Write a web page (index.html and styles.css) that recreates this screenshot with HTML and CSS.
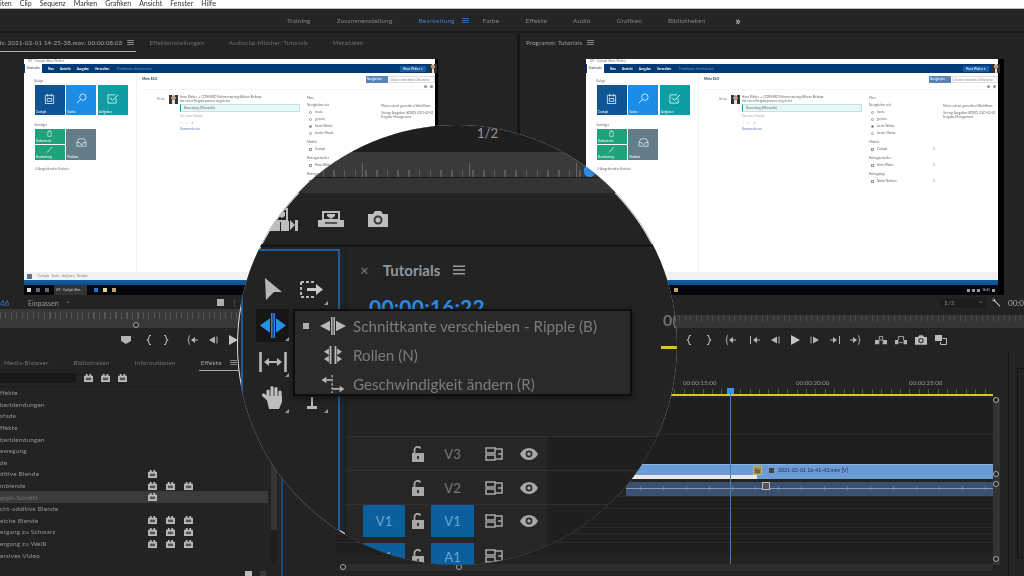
FILE: index.html
```html
<!DOCTYPE html>
<html lang="de">
<head>
  <meta charset="UTF-8">
  <title>Premiere Pro - Tutorials</title>
  <link rel="stylesheet" href="styles.css">
</head>
<body>
  <svg class="defs" width="0" height="0">
    <symbol id="ham" viewBox="0 0 8 6"><path d="M0 .5h8M0 3h8M0 5.500h8" stroke="currentColor" fill="none"/></symbol>
    <symbol id="badge" viewBox="0 0 10 9"><path d="M0 2h2V0h2v2h2V0h2v2h2v7H0z" fill="#bdbdbd"/><path d="M2 4h6v3H2z" fill="#555"/></symbol>
    <symbol id="marker" viewBox="0 0 12 10"><path d="M1 1h10v5L6 9 1 6z" fill="#b5b5b5"/></symbol>
    <symbol id="brace-l" viewBox="0 0 12 10"><path d="M8 .5H7C5.500 .5 6.500 4 4.500 5c2 1 1 4.500 2.500 4.500h1" stroke="#c0c0c0" stroke-width="1.100" fill="none"/></symbol>
    <symbol id="brace-r" viewBox="0 0 12 10"><path d="M4 .5h1C6.500 .5 5.500 4 7.500 5c-2 1-1 4.500-2.500 4.500H4" stroke="#c0c0c0" stroke-width="1.100" fill="none"/></symbol>
    <symbol id="go-in" viewBox="0 0 12 10"><path d="M3 .5H2.500C1.500 1 2.500 4 1 5c1.500 1 .5 4 1.500 4.500H3M11 5H7" stroke="#b5b5b5" fill="none"/><path d="M8 2 4 5l4 3z" fill="#b5b5b5"/></symbol>
    <symbol id="step-in" viewBox="0 0 12 10"><path d="M1.500 1v8M11 5H7" stroke="#b5b5b5" fill="none"/><path d="M8 2 4 5l4 3z" fill="#b5b5b5"/></symbol>
    <symbol id="back" viewBox="0 0 12 10"><path d="M8 1.500 2 5l6 3.500z" fill="#b5b5b5"/><path d="M10 1.500v7" stroke="#b5b5b5" fill="none"/></symbol>
    <symbol id="play" viewBox="0 0 12 10"><path d="M2 0l9 5-9 5z" fill="#c4c4c4"/></symbol>
    <symbol id="fwd" viewBox="0 0 12 10"><path d="M4 1.500 10 5 4 8.500z" fill="#b5b5b5"/><path d="M2 1.500v7" stroke="#b5b5b5" fill="none"/></symbol>
    <symbol id="step-out" viewBox="0 0 12 10"><path d="M10.500 1v8M1 5h4" stroke="#b5b5b5" fill="none"/><path d="M4 2l4 3-4 3z" fill="#b5b5b5"/></symbol>
    <symbol id="go-out" viewBox="0 0 12 10"><path d="M9 .5h.5c1 .5 0 3.500 1.500 4.500-1.500 1-.5 4-1.500 4.500H9M1 5h4" stroke="#b5b5b5" fill="none"/><path d="M4 2l4 3-4 3z" fill="#b5b5b5"/></symbol>
    <symbol id="lift" viewBox="0 0 14 10"><path d="M0 5h5v5H0zM9 5h5v5H9z" fill="#b5b5b5"/><path d="M5 1h4v4H5z" fill="none" stroke="#b5b5b5"/></symbol>
    <symbol id="extract" viewBox="0 0 14 10"><path d="M0 5h4v5H0zM10 5h4v5h-4z" fill="#b5b5b5"/><path d="M4 5V1h6v4M5 8h4" fill="none" stroke="#b5b5b5"/></symbol>
    <symbol id="camera" viewBox="0 0 20 16"><path d="M0 3h5l2-3h6l2 3h5v13H0z" fill="#bdbdbd"/><circle cx="10" cy="9" r="4.500" fill="#3a3a3a"/><circle cx="10" cy="9" r="2.500" fill="#bdbdbd"/></symbol>
    <symbol id="compare" viewBox="0 0 12 10"><path d="M0 0h7v6H0z" fill="#bdbdbd"/><path d="M7.500 3.500h4v6h-6V7" fill="none" stroke="#bdbdbd"/></symbol>
    <symbol id="lock" viewBox="0 0 12 16"><path d="M0 7h12v9H0z" fill="#a8a8a8"/><path d="M5 10h2v3H5z" fill="#333"/><path d="M2.500 7V3.500a3.200 3.200 0 0 1 6-1" fill="none" stroke="#a8a8a8" stroke-width="1.800"/></symbol>
    <symbol id="sync" viewBox="0 0 18 14"><path d="M1 1h9v5H1zM1 8h9v5H1z" fill="none" stroke="#a8a8a8" stroke-width="1.500"/><path d="M10 2h7v10h-7M13 7h4" fill="none" stroke="#a8a8a8" stroke-width="1.500"/></symbol>
    <symbol id="eye" viewBox="0 0 18 12"><path d="M0 6c4-8 14-8 18 0-4 8-14 8-18 0z" fill="#a8a8a8"/><circle cx="9" cy="6" r="3.400" fill="#2a2a2a"/><circle cx="9" cy="6" r="1.800" fill="#a8a8a8"/></symbol>
    <symbol id="ripple" viewBox="0 0 26 24" preserveAspectRatio="none"><path d="M11.800 0v24M14.200 0v24" stroke="currentColor" stroke-width="1.500" fill="none"/><path d="M0 12l10-7v14zM26 12l-10-7v14z" fill="currentColor"/></symbol>
    <symbol id="t-cal" viewBox="0 0 12 12"><path d="M1.500 2.500h9v9h-9zM4 1v3M8 1v3M3.500 6h5v3h-5z" fill="none" stroke="#fff" stroke-width=".8"/></symbol>
    <symbol id="t-search" viewBox="0 0 12 12"><circle cx="7.500" cy="4.500" r="3.500" fill="none" stroke="#fff" stroke-width=".8"/><path d="M5 7l-4 4" stroke="#fff" stroke-width=".9"/></symbol>
    <symbol id="t-check" viewBox="0 0 12 12"><path d="M10 6v5H1V2h8" fill="none" stroke="#fff" stroke-width=".8"/><path d="M3 5l3 3 6-6" fill="none" stroke="#fff" stroke-width="1"/></symbol>
    <symbol id="t-doc" viewBox="0 0 12 12"><path d="M3 3h6v8H3zM5 3V1h2v2" fill="none" stroke="#fff" stroke-width=".9"/></symbol>
    <symbol id="t-pen" viewBox="0 0 12 12"><path d="M2 11l8-9" fill="none" stroke="#fff" stroke-width="1.200"/></symbol>
    <symbol id="t-mail" viewBox="0 0 12 12"><path d="M1 6l2-4h6l2 4v4H1zM1 6h3l1 2h2l1-2h3" fill="none" stroke="#fff" stroke-width=".7"/></symbol>
  </svg>

  <div class="page">
    <nav class="menubar">
      <span>iten</span><span>Clip</span><span>Sequenz</span><span>Marken</span><span>Grafiken</span><span>Ansicht</span><span>Fenster</span><span>Hilfe</span>
    </nav>

    <div class="workspaces">
      <span>Training</span>
      <span>Zusammenstellung</span>
      <span class="active">Bearbeitung <svg class="ham"><use href="#ham"/></svg></span>
      <span>Farbe</span>
      <span>Effekte</span>
      <span>Audio</span>
      <span>Grafiken</span>
      <span>Bibliotheken</span>
      <b class="more">&raquo;</b>
    </div>

    <div class="monitors">
      <section class="monitor source">
        <div class="tabs">
          <span class="tab on">ls: 2021-02-01 14-25-38.mov: 00:00:08:03 <svg class="ham"><use href="#ham"/></svg></span>
          <span class="tab">Effekteinstellungen</span>
          <span class="tab">Audioclip-Mischer: Tutorials</span>
          <span class="tab">Metadaten</span>
        </div>
        <div class="stage">
          <div class="shot">
            <div class="win">
              <div class="win-title">KIT - Cockpit (Hans Walter)</div>
              <div class="win-nav">
                <span class="home">Startseite</span><b>Neu</b><b>Ansicht</b><b>Ausgabe</b><b>Verwalten</b><i>Funktionen durchsuchen</i>
                <span class="user">Hans Walter &#9662;</span><span class="ava small"></span>
              </div>
              <div class="win-body">
                <aside class="side">
                  <p>Belege</p>
                  <div class="tiles">
                    <div class="tile navy"><svg class="t-ico"><use href="#t-cal"/></svg><em>Cockpit</em></div>
                    <div class="tile sky"><svg class="t-ico"><use href="#t-search"/></svg><em>Suche</em></div>
                    <div class="tile teal"><svg class="t-ico"><use href="#t-check"/></svg><em>Aufgaben</em></div>
                  </div>
                  <p class="second">Sonstiges</p>
                  <div class="tiles low">
                    <div class="stack">
                      <div class="tile green"><svg class="t-ico"><use href="#t-doc"/></svg><em>Dokumente</em></div>
                      <div class="tile green"><svg class="t-ico"><use href="#t-pen"/></svg><em>Bearbeitung</em></div>
                    </div>
                    <div class="tile slate"><svg class="t-ico"><use href="#t-mail"/></svg><em>Postbox</em></div>
                  </div>
                  <p class="hidden-tiles">0 Ausgeblendete Kacheln</p>
                </aside>
                <main class="feed">
                  <div class="feed-head">
                    <b>Mein ELO</b>
                    <span class="btn on">Neuigkeiten</span><span class="btn">Zuletzt verwendete Dokumente</span>
                  </div>
                  <div class="feed-tools"><i></i><i></i></div>
                  <div class="feed-cols">
                    <span class="day">Heute</span>
                    <span class="ava"></span>
                    <div class="post">
                      <p>Hans Walter &rarr; CONVERO Nehmerswering/African Risikopr.</p>
                      <p>hat einen Freigabeprozess eingeleitet</p>
                      <div class="quote">Bewertung (Mitzurolle)</div>
                      <p class="muted">Vor einer Stunde</p>
                      <p class="muted">&#9825; &nbsp; &#8617; &nbsp; &#9733;</p>
                      <p class="link">Kommentieren</p>
                    </div>
                    <div class="filter">
                      <p>Filter</p>
                      <p>Neuigkeiten seit</p>
                      <p class="opt"><i class="rd"></i>heute</p>
                      <p class="opt"><i class="rd"></i>gestern</p>
                      <p class="opt"><i class="rd on"></i>letzte Woche</p>
                      <p class="opt"><i class="rd"></i>letzter Monat</p>
                      <p class="group">Module</p>
                      <p class="opt"><i class="cb"></i>Cockpit <u>1</u></p>
                      <p class="group">Beitragsersteller</p>
                      <p class="opt"><i class="cb"></i>Hans Walter <u>1</u></p>
                      <p class="group">Beitragstyp</p>
                      <p class="opt"><i class="cb"></i>Notiz/Notizen <u>1</u></p>
                    </div>
                    <div class="recent">
                      <p>Meine zuletzt gemerkten Workflows</p>
                      <p>Vertrag Ausgaben (KOKO) 2021-02-01</p>
                      <p>Freigabe Management</p>
                    </div>
                  </div>
                </main>
              </div>
              <div class="win-foot"><i class="sq"></i>Cockpits &nbsp; Suche &nbsp; Aufgaben &nbsp; Postbox</div>
              <div class="win-strip"></div>
            </div>
            <div class="taskbar">
              <i class="start"></i><i class="ti"></i><i class="ti"></i><span class="task">KIT - Cockpit (Han..</span><i class="ti blue"></i><i class="ti yel"></i><i class="ti gold"></i>
            </div>
          </div>
        </div>
        <div class="controls">
          <span class="tc">46</span>
          <span class="fit">Einpassen <i class="chev">&#8964;</i></span>
          <i class="ctl-a"></i>
          <i class="ctl-b">&#8942;&#8942;</i>
        </div>
        <div class="ruler big"><i class="knob"></i></div>
        <div class="transport src">
          <svg class="ti-12"><use href="#marker"/></svg>
          <svg class="ti-12 w3"><use href="#brace-l"/></svg>
          <svg class="ti-12 n3"><use href="#brace-r"/></svg>
          <svg class="ti-12 w7"><use href="#go-in"/></svg>
          <svg class="ti-12"><use href="#back"/></svg>
          <svg class="ti-12"><use href="#play"/></svg>
        </div>
      </section>

      <section class="monitor program">
        <div class="tabs">
          <span class="tab plain">Programm: Tutorials <svg class="ham"><use href="#ham"/></svg></span>
        </div>
        <div class="stage">
          <div class="shot">
            <div class="win">
              <div class="win-title">KIT - Cockpit (Hans Walter)</div>
              <div class="win-nav">
                <span class="home">Startseite</span><b>Neu</b><b>Ansicht</b><b>Ausgabe</b><b>Verwalten</b><i>Funktionen durchsuchen</i>
                <span class="user">Hans Walter &#9662;</span><span class="ava small"></span>
              </div>
              <div class="win-body">
                <aside class="side">
                  <p>Belege</p>
                  <div class="tiles">
                    <div class="tile navy"><svg class="t-ico"><use href="#t-cal"/></svg><em>Cockpit</em></div>
                    <div class="tile sky"><svg class="t-ico"><use href="#t-search"/></svg><em>Suche</em></div>
                    <div class="tile teal"><svg class="t-ico"><use href="#t-check"/></svg><em>Aufgaben</em></div>
                  </div>
                  <p class="second">Sonstiges</p>
                  <div class="tiles low">
                    <div class="stack">
                      <div class="tile green"><svg class="t-ico"><use href="#t-doc"/></svg><em>Dokumente</em></div>
                      <div class="tile green"><svg class="t-ico"><use href="#t-pen"/></svg><em>Bearbeitung</em></div>
                    </div>
                    <div class="tile slate"><svg class="t-ico"><use href="#t-mail"/></svg><em>Postbox</em></div>
                  </div>
                  <p class="hidden-tiles">0 Ausgeblendete Kacheln</p>
                </aside>
                <main class="feed">
                  <div class="feed-head">
                    <b>Mein ELO</b>
                    <span class="btn on">Neuigkeiten</span><span class="btn">Zuletzt verwendete Dokumente</span>
                  </div>
                  <div class="feed-tools"><i></i><i></i></div>
                  <div class="feed-cols">
                    <span class="day">Heute</span>
                    <span class="ava"></span>
                    <div class="post">
                      <p>Hans Walter &rarr; CONVERO Nehmerswering/African Risikopr.</p>
                      <p>hat einen Freigabeprozess eingeleitet</p>
                      <div class="quote">Bewertung (Mitzurolle)</div>
                      <p class="muted">Vor einer Stunde</p>
                      <p class="muted">&#9825; &nbsp; &#8617; &nbsp; &#9733;</p>
                      <p class="link">Kommentieren</p>
                    </div>
                    <div class="filter">
                      <p>Filter</p>
                      <p>Neuigkeiten seit</p>
                      <p class="opt"><i class="rd"></i>heute</p>
                      <p class="opt"><i class="rd"></i>gestern</p>
                      <p class="opt"><i class="rd on"></i>letzte Woche</p>
                      <p class="opt"><i class="rd"></i>letzter Monat</p>
                      <p class="group">Module</p>
                      <p class="opt"><i class="cb"></i>Cockpit <u>1</u></p>
                      <p class="group">Beitragsersteller</p>
                      <p class="opt"><i class="cb"></i>Hans Walter <u>1</u></p>
                      <p class="group">Beitragstyp</p>
                      <p class="opt"><i class="cb"></i>Notiz/Notizen <u>1</u></p>
                    </div>
                    <div class="recent">
                      <p>Meine zuletzt gemerkten Workflows</p>
                      <p>Vertrag Ausgaben (KOKO) 2021-02-01</p>
                      <p>Freigabe Management</p>
                    </div>
                  </div>
                </main>
              </div>
              <div class="win-foot"><i class="sq"></i>Cockpits &nbsp; Suche &nbsp; Aufgaben &nbsp; Postbox</div>
              <div class="win-strip"></div>
            </div>
            <div class="taskbar">
              <i class="start"></i><i class="ti"></i><i class="ti"></i><span class="task">KIT - Cockpit (Han..</span><i class="ti blue"></i><i class="ti yel"></i><i class="ti gold"></i>
              <span class="tray"><i class="ti"></i><i class="ti"></i><i class="ti"></i>16:41<i class="ti"></i></span>
            </div>
          </div>
        </div>
        <div class="controls right">
          <span class="ratio">1/2 <i class="chev">&#8964;</i></span>
          <svg class="wrench" viewBox="0 0 12 12"><path d="M1 0l3 1 1 3 7 7-1 1-7-7-3-1-1-3 2 2 1-1z" fill="#c4c4c4"/></svg>
          <span class="tc-end">00:0</span>
        </div>
        <div class="ruler"></div>
        <div class="transport prg">
          <svg class="ti-12"><use href="#brace-l"/></svg>
          <svg class="ti-12"><use href="#brace-r"/></svg>
          <svg class="ti-12 w2"><use href="#go-in"/></svg>
          <svg class="ti-12 w4"><use href="#step-in"/></svg>
          <svg class="ti-12"><use href="#back"/></svg>
          <svg class="ti-12"><use href="#play"/></svg>
          <svg class="ti-12"><use href="#fwd"/></svg>
          <svg class="ti-12"><use href="#step-out"/></svg>
          <svg class="ti-12"><use href="#go-out"/></svg>
          <svg class="ti-12 w6"><use href="#lift"/></svg>
          <svg class="ti-12"><use href="#extract"/></svg>
          <svg class="ti-12"><use href="#camera"/></svg>
          <svg class="ti-12"><use href="#compare"/></svg>
        </div>
      </section>
    </div>

    <div class="lower">
      <section class="effects">
        <div class="tabs small">
          <span class="tab">Media-Browser</span>
          <span class="tab">Bibliotheken</span>
          <span class="tab">Informationen</span>
          <span class="tab on">Effekte <svg class="ham"><use href="#ham"/></svg></span>
        </div>
        <div class="search">
          <i class="field"></i>
          <svg class="bdg"><use href="#badge"/></svg>
          <svg class="bdg"><use href="#badge"/></svg>
          <svg class="bdg"><use href="#badge"/></svg>
        </div>
        <div class="fx-wrap">
          <ul class="fx-list">
            <li><span>ffekte</span></li>
            <li><span>berblendungen</span></li>
            <li><span>sfade</span></li>
            <li><span>ffekte</span></li>
            <li><span>berblendungen</span></li>
            <li><span>ewegung</span></li>
            <li><span>de</span></li>
            <li><span>ditive Blende</span><svg class="bdg"><use href="#badge"/></svg></li>
            <li><span>mblende</span><svg class="bdg"><use href="#badge"/></svg><svg class="bdg"><use href="#badge"/></svg><svg class="bdg"><use href="#badge"/></svg></li>
            <li class="sel"><span>orph-Schnitt</span><svg class="bdg"><use href="#badge"/></svg></li>
            <li><span>cht-additive Blende</span></li>
            <li><span>eiche Blende</span><svg class="bdg"><use href="#badge"/></svg><svg class="bdg"><use href="#badge"/></svg><svg class="bdg"><use href="#badge"/></svg></li>
            <li><span>ergang zu Schwarz</span><svg class="bdg"><use href="#badge"/></svg><svg class="bdg"><use href="#badge"/></svg><svg class="bdg"><use href="#badge"/></svg></li>
            <li><span>ergang zu Wei&szlig;</span><svg class="bdg"><use href="#badge"/></svg><svg class="bdg"><use href="#badge"/></svg><svg class="bdg"><use href="#badge"/></svg></li>
            <li><span>ersives Video</span></li>
          </ul>
          <div class="fx-scroll"><i></i></div>
        </div>
        <div class="fx-foot"><i class="folder"></i><i class="trash"></i></div>
      </section>

      <section class="toolcol"></section>

      <section class="timeline">
        <div class="tl-ruler">
          <div class="tl-labels"><span>00:00:15:00</span><span>00:00:20:00</span><span>00:00:25:00</span></div>
          <div class="tl-ticks"></div>
          <div class="workarea"></div>
        </div>
        <div class="tl-main">
          <div class="tl-tracks">
            <div class="tr" style="height:37px"></div>
            <div class="tr" style="height:30px"></div>
            <div class="clip-v">
              <i class="fx-mark">fx</i>
              <span class="clip-name"><i class="clip-sq"></i>2021-02-01 16-41-43.mov [V]</span>
              <i class="rendered"></i>
            </div>
            <div class="clip-a"><i class="a-mark"></i></div>
            <div class="tr" style="height:12px"></div>
            <div class="tr" style="height:19px"></div>
            <div class="tr" style="height:6px"></div>
            <div class="tr" style="height:9px"></div>
            <div class="tr" style="height:13px"></div>
          </div>
          <div class="tl-scroll">
            <i class="knob" style="top:0"></i><i class="knob" style="top:74px"></i><i class="knob" style="top:84px"></i><i class="knob" style="top:159px"></i>
          </div>
          <i class="playhead"></i>
        </div>
        <div class="tl-bar"><i class="knob"></i><i class="knob"></i></div>
      </section>

      <section class="meters"><i class="meter"></i></section>
    </div>
  </div>

  <!-- the magnifier over the editor -->
  <div class="lens">
    <div class="lens-head">1/2</div>
    <div class="lens-ruler"><i class="lens-cti"></i></div>
    <div class="lens-buttons">
      <svg class="multi" viewBox="0 0 28 24"><path d="M0 14h10v10H0zM11 14h8v10h-8z" fill="#bdbdbd"/><path d="M6 2h11v12H6z" fill="none" stroke="#bdbdbd" stroke-width="2"/><path d="M9 5h6v4l-3 2-3-2z" fill="#bdbdbd"/><path d="M20 13l5 5-5 5zM25 13h3v11h-3z" fill="#bdbdbd"/></svg>
      <svg class="laptop" viewBox="0 0 26 16"><path d="M5 1h16v8H5z" fill="none" stroke="#bdbdbd" stroke-width="2"/><path d="M9 3h8v2l-4 3-4-3z" fill="#bdbdbd"/><path d="M0 9h26v7H0z" fill="#bdbdbd"/><path d="M7 11h12v2H7z" fill="#555"/></svg>
      <svg class="cam"><use href="#camera"/></svg>
    </div>
    <div class="lens-body">
      <div class="tools">
        <div class="tool">
          <svg class="arrow" width="18" height="23" viewBox="0 0 18 23"><path d="M0 0l17 14H9l-8 8z" fill="#b8b8b8"/></svg>
        </div>
        <div class="tool corner">
          <svg width="24" height="17" viewBox="0 0 24 17"><path d="M1 1h14M1 16h14M1 1v15" fill="none" stroke="#b8b8b8" stroke-width="2" stroke-dasharray="3 2"/><path d="M7 7h9V3l7 5.500-7 5.500v-4H7z" fill="#c8c8c8"/></svg>
        </div>
        <div class="tool active corner">
          <svg class="ripple-blue"><use href="#ripple"/></svg>
        </div>
        <div class="tool"></div>
        <div class="tool corner">
          <svg width="28" height="20" viewBox="0 0 28 20"><path d="M1.500 0v20M26.500 0v20" stroke="#b8b8b8" stroke-width="2.600" fill="none"/><path d="M8 10h12" stroke="#b8b8b8" stroke-width="2"/><path d="M5 10l5-4v8zM23 10l-5-4v8z" fill="#b8b8b8"/></svg>
        </div>
        <div class="tool"></div>
        <div class="tool corner">
          <svg width="23" height="25" viewBox="0 0 23 25"><path d="M7 12V6M11 11V2.500M15 11V3.500M19 12V7M7 14L2.500 10" stroke="#bdbdbd" stroke-width="3.200" stroke-linecap="round" fill="none"/><path d="M5 11h16v6l-3 7H8z" fill="#bdbdbd"/></svg>
        </div>
        <div class="tool corner type">
          <svg width="12" height="12" viewBox="0 0 12 12"><path d="M5 0h2v9H5zM1 9h10v3H1z" fill="#b8b8b8"/></svg>
        </div>
      </div>
      <div class="lens-timeline">
        <div class="seq-tab"><span class="x">&times;</span><span class="seq-name">Tutorials</span><svg class="seq-ham"><use href="#ham"/></svg></div>
        <div class="timecode">00:00:16:22</div>
        <div class="lens-tracks">
          <div class="row"><i></i><svg class="lk"><use href="#lock"/></svg><b class="tgt">V3</b><svg class="sn"><use href="#sync"/></svg><svg class="ey"><use href="#eye"/></svg></div>
          <div class="row"><i></i><svg class="lk"><use href="#lock"/></svg><b class="tgt">V2</b><svg class="sn"><use href="#sync"/></svg><svg class="ey"><use href="#eye"/></svg></div>
          <div class="row v1"><b class="patch">V1</b><svg class="lk"><use href="#lock"/></svg><b class="tgt patch">V1</b><svg class="sn"><use href="#sync"/></svg><svg class="ey"><use href="#eye"/></svg></div>
          <div class="row a1"><b class="patch">A1</b><svg class="lk"><use href="#lock"/></svg><b class="tgt patch">A1</b><svg class="sn"><use href="#sync"/></svg></div>
        </div>
      </div>
    </div>

    <div class="lens-zero">0(</div>
    <i class="lens-work"></i>

    <div class="popup">
      <div class="pop-row">
        <i class="bullet"></i>
        <svg class="pop-ico"><use href="#ripple"/></svg>
        <span>Schnittkante verschieben - Ripple (B)</span>
      </div>
      <div class="pop-row">
        <i class="bullet none"></i>
        <svg class="pop-ico" viewBox="0 0 28 22"><path d="M11 0v22M17 0v22" stroke="#b8b8b8" stroke-width="2.200"/><path d="M3 7l6-4v8zM25 7l-6-4v8zM3 16l6-4v8zM25 16l-6-4v8z" fill="#b8b8b8"/></svg>
        <span>Rollen (N)</span>
      </div>
      <div class="pop-row">
        <i class="bullet none"></i>
        <svg class="pop-ico" viewBox="0 0 28 22"><path d="M12 6H6" stroke="#b8b8b8" stroke-width="2"/><path d="M0 6l6-4v8z" fill="#b8b8b8"/><path d="M14 17h8" stroke="#b8b8b8" stroke-width="2"/><path d="M28 17l-6-4v8z" fill="#b8b8b8"/><path d="M13 0v22" stroke="#b8b8b8" stroke-width="1.600" stroke-dasharray="3 2"/></svg>
        <span>Geschwindigkeit &auml;ndern (R)</span>
      </div>
    </div>
  </div>
</body>
</html>
```
FILE: styles.css
```css
* {
  box-sizing: border-box;
}

html, body {
  margin: 0;
  padding: 0;
}

body {
  position: relative;
  width: 1024px;
  height: 576px;
  overflow: hidden;
  background: #232323;
  font-family: "Lato", "Noto Sans", sans-serif;
  color: #8f8f8f;
}

.defs {
  position: absolute;
}

i, em {
  font-style: normal;
}

p, ul {
  margin: 0;
  padding: 0;
}

.page {
  width: 1024px;
  height: 576px;
  filter: blur(0.3px);
}

.menubar {
  height: 9px;
  background: #fff;
  border-bottom: 1px solid #bbb;
  display: flex;
  color: #333;
  font-size: 7px;
  line-height: 7px;
}

.menubar span {
  margin-right: 8px;
}

.workspaces {
  height: 24px;
  background: #252525;
  border-bottom: 2px solid #1a1a1a;
  padding-left: 287px;
  display: flex;
  align-items: center;
  gap: 26px;
  font-size: 6.4px;
  letter-spacing: 0.2px;
  color: #848484;
}

.workspaces .active {
  color: #3a7fcc;
  display: flex;
  align-items: center;
  gap: 7px;
  margin-right: -12px;
}

.ham {
  width: 7px;
  height: 5px;
  color: inherit;
}

.more {
  margin-left: 4px;
  font-size: 11px;
  color: #bbb;
}

.monitors {
  display: grid;
  grid-template-columns: 517px 504px;
  gap: 3px;
  height: 319px;
  background: #161616;
}

.monitor {
  background: #232323;
  display: flex;
  flex-direction: column;
}

.tabs {
  height: 19px;
  display: flex;
  align-items: center;
  gap: 25px;
  font-size: 6px;
  letter-spacing: 0.2px;
  color: #727272;
}

.tab {
  height: 19px;
  display: flex;
  align-items: center;
  gap: 5px;
}

.tab.on {
  color: #a8a8a8;
  border-bottom: 1.5px solid #aaa;
  padding-right: 2px;
  margin-right: -12px;
}

.tab.plain {
  color: #a0a0a0;
  padding-left: 6px;
}

.stage {
  height: 244px;
  padding: 7px 0 0 24px;
}

.program .stage {
  padding-left: 66px;
}

.shot {
  width: 414px;
  height: 236px;
  background: #000;
  filter: blur(0.35px);
}

.program .shot {
  width: 418px;
}

.win {
  width: 411px;
  height: 226px;
  background: #fff;
  display: flex;
  flex-direction: column;
  font-size: 3.5px;
  line-height: 4px;
  color: #6a6a6a;
}

.program .win {
  width: 412px;
}

.win-title {
  height: 5px;
  padding-left: 4px;
  font-size: 3px;
  color: #777;
}

.win-nav {
  height: 9px;
  background: #003a78;
  display: flex;
  align-items: center;
  gap: 6px;
  color: #fff;
  font-size: 3.2px;
}

.win-nav .home {
  background: #fff;
  color: #335;
  height: 9px;
  width: 17px;
  margin-left: 1px;
  line-height: 9px;
  text-align: center;
}

.win-nav i {
  color: #7c97ba;
  margin-left: 2px;
}

.win-nav .user {
  margin-left: auto;
  background: #1a5aa0;
  height: 6px;
  line-height: 6px;
  padding: 0 3px;
  margin-right: -3px;
}

.ava {
  display: block;
  width: 9px;
  height: 9px;
  background: radial-gradient(circle at 50% 30%, #b99a80 0 28%, transparent 30%), linear-gradient(90deg, #333 0 35%, #ddd 35% 65%, #333 65%);
}

.ava.small {
  width: 8px;
  margin-right: -2px;
  flex: none;
}

.win-body {
  flex: 1;
  display: flex;
  min-height: 0;
}

.side {
  width: 113px;
  padding: 6px 0 0 10.5px;
  border-right: 1px solid #f3f3f3;
  font-size: 3px;
}

.tiles {
  display: flex;
  gap: 1.5px;
  margin-top: 2px;
}

.second {
  margin-top: 8px;
}

.tile {
  position: relative;
  width: 30px;
  height: 30px;
  color: #fff;
  display: flex;
  justify-content: center;
  padding-top: 8px;
}

.t-ico {
  width: 11px;
  height: 11px;
}

.tile em {
  position: absolute;
  left: 1.5px;
  bottom: 1px;
  font-size: 3px;
  line-height: 4px;
}

.navy { background: #0e5596; }
.sky { background: #1b8de6; }
.teal { background: #0d9ea3; }
.green { background: #1fa37a; }
.slate { background: #647d89; height: 31px; }

.stack {
  display: flex;
  flex-direction: column;
  gap: 1.5px;
}

.tile.green {
  height: 14.5px;
  padding-top: 1px;
}

.tile.green .t-ico {
  width: 7px;
  height: 7px;
}

.hidden-tiles {
  margin: 7px 0 0 1px;
}

.feed {
  flex: 1;
  padding-left: 5px;
}

.feed-head {
  height: 12px;
  display: flex;
  align-items: center;
  font-size: 3.5px;
  color: #33455a;
}

.feed-head b {
  margin-right: auto;
}

.btn {
  flex: none;
  width: 46px;
  height: 7px;
  line-height: 7px;
  padding: 0 1px;
  border: 0.5px solid #ddd;
  font-size: 2.8px;
  color: #888;
  margin-left: 1px;
  overflow: hidden;
  white-space: nowrap;
}

.btn.on {
  background: #5a84b5;
  color: #fff;
  border: 0;
  width: 22px;
}

.feed-tools {
  height: 5px;
  display: flex;
  justify-content: flex-end;
  gap: 3px;
  padding-right: 2px;
  border-bottom: 1px solid #f4f4f4;
}

.feed-tools i {
  width: 3px;
  height: 3px;
  border-radius: 50%;
  background: #8a97a5;
}

.feed-cols {
  display: flex;
  padding-top: 5px;
}

.day {
  width: 27px;
  padding: 2px 0 0 15px;
  font-size: 3px;
  color: #888;
}

.post {
  width: 120px;
  margin-left: 2px;
  font-size: 3.1px;
}

.quote {
  height: 8px;
  margin: 1px 0 2px;
  background: #e8f6f5;
  border: 0.5px solid #bfe5e2;
  border-left: 1px solid #2c8f8b;
  padding-left: 3px;
  line-height: 7px;
}

.muted {
  color: #aaa;
  margin-bottom: 2.5px;
}

.link {
  color: #5a84b5;
}

.filter {
  width: 74px;
  margin-left: 7px;
  font-size: 3.1px;
}

.filter p {
  height: 7px;
  line-height: 7px;
}

.filter .opt {
  padding-left: 2px;
  position: relative;
  display: flex;
  align-items: center;
  gap: 3px;
}

.rd, .cb {
  width: 3px;
  height: 3px;
  border: 0.4px solid #999;
}

.rd {
  border-radius: 50%;
}

.rd.on {
  background: #3a78b5;
}

.filter u {
  position: absolute;
  left: 64px;
  text-decoration: none;
}

.filter .group {
  margin-top: 2px;
}

.recent {
  padding-top: 9px;
  font-size: 3.1px;
}

.recent p:nth-child(2) {
  margin-top: 3px;
}

.win-foot {
  height: 8px;
  background: #eff1f3;
  padding-left: 3px;
  display: flex;
  align-items: center;
  gap: 3px;
  font-size: 3px;
  color: #888;
}

.sq {
  width: 5px;
  height: 5px;
  background: #5b6f85;
  margin-right: 3px;
}

.win-strip {
  height: 5px;
  background: linear-gradient(#0e5fa5, #0a4f8f);
}

.taskbar {
  height: 10px;
  width: 411px;
  background: #05070c;
  display: flex;
  align-items: center;
  gap: 5px;
  padding-left: 3px;
  font-size: 3px;
  color: #ccc;
}

.program .taskbar {
  width: 412px;
}

.start {
  width: 4px;
  height: 4px;
  background: #ddd;
}

.ti {
  width: 4px;
  height: 4px;
  background: #666;
}

.ti.blue { background: #1e7ad0; }
.ti.yel { background: #d8d8a0; }
.ti.gold { background: #c0a860; }

.task {
  width: 33px;
  height: 10px;
  line-height: 10px;
  background: #333;
  padding-left: 2px;
  white-space: nowrap;
  overflow: hidden;
  margin-right: 2px;
}

.tray {
  margin-left: auto;
  margin-right: 3px;
  display: flex;
  align-items: center;
  gap: 2px;
}

.tray .ti {
  background: #999;
  width: 3px;
  height: 3px;
}

.controls {
  height: 13px;
  display: flex;
  align-items: center;
  font-size: 7px;
  position: relative;
}

.tc {
  color: #2b7fd0;
  width: 25px;
  font-size: 8px;
}

.fit {
  width: 48px;
  color: #9a9a9a;
  position: relative;
  padding-left: 3px;
}

.chev {
  position: absolute;
  right: 2px;
  top: -3px;
  font-size: 7px;
  color: #777;
}

.ctl-a {
  margin-left: 144px;
  width: 7px;
  height: 7px;
  background: #b0b0b0;
}

.ctl-b {
  margin-left: 7px;
  font-size: 7px;
  color: #888;
}

.controls.right {
  padding-left: 420px;
}

.ratio {
  width: 48px;
  height: 10px;
  line-height: 10px;
  padding-left: 4px;
  background: #1d1d1d;
  position: relative;
  font-size: 6.5px;
  color: #888;
}

.wrench {
  width: 9px;
  height: 9px;
  margin-left: 6px;
}

.tc-end {
  margin-left: 8px;
  font-size: 8px;
  color: #aaa;
}

.ruler {
  height: 19px;
  margin-top: 0;
  border-top: 6px solid #232323;
  background: repeating-linear-gradient(90deg, #4c4c4c 0 1px, transparent 1px 5.5px) 0 0 / 100% 6px no-repeat, #353535;
}

.ruler.big {
  border-top: 0;
  background: repeating-linear-gradient(90deg, #555 0 1px, transparent 1px 5.5px) 0 3px / 100% 7px no-repeat, #383838;
  position: relative;
}

.knob {
  display: block;
  position: absolute;
  width: 6px;
  height: 6px;
  border: 1px solid #aaa;
  border-radius: 50%;
  background: #232323;
}

.ruler .knob {
  left: 133px;
  top: 13px;
}

.transport {
  height: 24px;
  display: flex;
  align-items: center;
  gap: 8px;
}

.transport.src {
  padding-left: 120px;
}

.transport.prg {
  padding-left: 163px;
}

.ti-12 {
  width: 12px;
  height: 10px;
}

.w2 { margin-left: 2px; }
.w3 { margin-left: 3px; }
.w4 { margin-left: 4px; }
.w6 { margin-left: 6px; }
.w7 { margin-left: 7px; }
.n3 { margin-left: -3px; }

.lower {
  height: 224px;
  display: grid;
  grid-template-columns: 281px 55px 667px 21px;
  background: #232323;
}

.effects {
  display: flex;
  flex-direction: column;
  position: relative;
}

.tabs.small {
  padding-left: 4px;
  gap: 25px;
  height: 20px;
  font-size: 6.2px;
  color: #727272;
}

.tabs.small .tab.on {
  height: 16px;
  margin: 1px 0 0 -2px;
  padding: 0 3px 0 2px;
  color: #a8a8a8;
  gap: 8px;
}

.search {
  height: 11px;
  display: flex;
  align-items: center;
  gap: 8px;
}

.field {
  width: 76px;
  height: 10px;
  background: #181818;
}

.bdg {
  width: 9px;
  height: 8px;
}

.fx-wrap {
  display: flex;
  margin-top: 3px;
  border-top: 1px solid #1c1c1c;
  flex: 1;
}

.fx-list {
  list-style: none;
  width: 268px;
  font-size: 6.4px;
  letter-spacing: 0.2px;
  color: #949494;
}

.fx-list li {
  height: 11.6px;
  display: flex;
  align-items: center;
  gap: 9px;
}

.fx-list span {
  width: 139px;
  flex: none;
  white-space: nowrap;
}

.fx-list .sel {
  background: #3b3b3b;
  color: #7a7a7a;
}

.fx-scroll {
  width: 6px;
  margin-left: 3px;
  position: relative;
  background: #1e1e1e;
}

.fx-scroll i {
  display: block;
  margin-top: 33px;
  height: 110px;
  background: #353535;
}

.fx-foot {
  height: 12px;
  display: flex;
  justify-content: flex-end;
  align-items: flex-end;
  gap: 8px;
  padding-right: 15px;
}

.folder {
  width: 7px;
  height: 5px;
  background: #bbb;
}

.trash {
  width: 6px;
  height: 5px;
  background: #3c3c3c;
}

.toolcol {
  border-left: 2px solid #1c4a78;
}

.timeline {
  position: relative;
  display: flex;
  flex-direction: column;
}

.tl-ruler {
  height: 45px;
  position: relative;
}

.tl-labels {
  display: flex;
  padding: 26px 0 0 347px;
  font-size: 6.2px;
  color: #969696;
  line-height: 10px;
}

.tl-labels span {
  width: 113px;
  flex: none;
}

.tl-ticks {
  position: absolute;
  left: 0;
  right: 10px;
  top: 37px;
  height: 5px;
  background: repeating-linear-gradient(90deg, #555 0 1px, transparent 1px 9.4px);
}

.workarea {
  position: absolute;
  left: 0;
  width: 657px;
  top: 42px;
  height: 2px;
  background: #d6c62c;
}

.tl-main {
  position: relative;
  flex: 1;
  display: flex;
}

.tl-tracks {
  width: 657px;
}

.tr {
  border-top: 1px solid #2a2a2a;
  background: #1f1f1f;
}

.clip-v {
  position: relative;
  height: 15px;
  margin-left: 290px;
  background: #6c9bd6;
  border-top: 1px solid #8ab0e0;
  box-shadow: -300px 0 0 #1f1f1f;
}

.clip-name {
  position: absolute;
  left: 143px;
  top: 1px;
  display: flex;
  align-items: center;
  gap: 4px;
  font-size: 5.200px;
  line-height: 9px;
  color: #1e2c44;
  white-space: nowrap;
}

.clip-sq {
  width: 5px;
  height: 5px;
  background: #444;
}

.rendered {
  position: absolute;
  left: 0;
  bottom: 0;
  width: 131px;
  height: 4px;
  background: #e8e8e8;
}

.fx-mark {
  position: absolute;
  left: 127px;
  top: 1px;
  width: 9px;
  height: 9px;
  background: #9c8a50;
  border: 1px solid #c4b070;
  font-size: 6px;
  line-height: 7px;
  color: #2a2a1a;
  text-align: center;
  z-index: 1;
}

.clip-a {
  position: relative;
  height: 14px;
  margin: 3px 0 0 290px;
  background: linear-gradient(#3c5170 0 6px, #7d9cc4 6px 7px, #3c5170 7px);
}

.clip-a::after {
  content: "";
  position: absolute;
  left: 0;
  right: 0;
  top: 4px;
  height: 5px;
  background: repeating-linear-gradient(90deg, transparent 0 14px, #a9bfdc 14px 15px, transparent 15px 23px);
  opacity: .35;
}

.a-mark {
  position: absolute;
  left: 136px;
  top: 0;
  width: 8px;
  height: 8px;
  border: 1px solid #bbb;
  background: #555;
  z-index: 1;
}

.tl-scroll {
  position: relative;
  width: 7px;
  background: #333;
  height: 168px;
}

.tl-scroll .knob {
  left: 0;
}

.playhead {
  position: absolute;
  left: 394px;
  top: -9px;
  width: 1px;
  height: 177px;
  background: #3f7fb8;
}

.playhead::before {
  content: "";
  position: absolute;
  left: -3px;
  top: 0;
  width: 7px;
  height: 6px;
  background: #3a95ee;
}

.tl-bar {
  position: absolute;
  left: 4px;
  right: 10px;
  bottom: 5px;
  height: 7px;
  background: #2c2c2c;
}

.tl-bar .knob:first-child {
  left: 0;
}

.tl-bar .knob:last-child {
  left: 116px;
}

.meters {
  border-left: 1px solid #161616;
  margin-left: 5px;
  padding: 16px 0 0 8px;
}

.meter {
  display: block;
  height: 190px;
  border: 1px solid #111;
  border-right: 0;
}

/* magnifier */
.lens {
  position: absolute;
  left: 237px;
  top: 125px;
  width: 440px;
  height: 440px;
  border-radius: 50%;
  overflow: hidden;
  background: #232323;
  box-shadow: inset 0 0 0 1px #e0e0e0;
}

.lens-head {
  height: 27px;
  background: #1f1f1f;
  padding: 0 0 0 240px;
  font-size: 13px;
  line-height: 16px;
  color: #9a9a9a;
}

.lens-ruler {
  position: relative;
  height: 41px;
  background:
    repeating-linear-gradient(90deg, #666 0 1px, transparent 1px 107px) 18px 11px / 100% 14px no-repeat,
    repeating-linear-gradient(90deg, #5c5c5c 0 1.5px, transparent 1.5px 10.7px) 0 18px / 100% 7px no-repeat,
    linear-gradient(#3a3a3a 0 25px, #1d1d1d 25px 26px, #343434 26px);
}

.lens-cti {
  position: absolute;
  left: 347px;
  top: 15px;
  width: 11px;
  height: 10px;
  background: #2f8ae6;
  border-radius: 2px 2px 5px 5px;
}

.lens-buttons {
  height: 54px;
  border-bottom: 3px solid #171717;
  padding-left: 33px;
  display: flex;
  align-items: center;
  gap: 20px;
}

.multi {
  width: 28px;
  height: 24px;
}

.laptop {
  width: 26px;
  height: 16px;
  margin-right: 4px;
}

.cam {
  width: 20px;
  height: 16px;
}

.lens-body {
  display: flex;
  padding-left: 4px;
  height: 318px;
}

.tools {
  width: 99px;
  height: 300px;
  border: 2px solid #1f5c9c;
  border-bottom: 0;
  padding: 22px 0 0 13px;
  display: grid;
  grid-template-columns: 39px 39px;
  grid-auto-rows: 36px;
  margin-top: 2px;
  background: #232323;
}

.tool {
  position: relative;
  display: flex;
  align-items: center;
  justify-content: center;
  width: 33px;
  height: 33px;
}

.arrow {
  margin-left: 3px;
}

.tool.corner::after {
  content: "";
  position: absolute;
  right: 0;
  bottom: 1px;
  border: 2px solid transparent;
  border-right-color: #999;
  border-bottom-color: #999;
}

.tool.active {
  background: #161616;
  border-radius: 2px;
}

.tool.type {
  align-items: flex-start;
  padding-top: 16px;
}

.ripple-blue {
  width: 26px;
  height: 25px;
  color: #2d8ceb;
}

.lens-timeline {
  flex: 1;
  margin-left: 5px;
  border-left: 1px solid #1a1a1a;
  background: #232323;
}

.seq-tab {
  height: 36px;
  padding-left: 14px;
  display: flex;
  align-items: center;
  margin-top: 5px;
  font-size: 15px;
  color: #9c9c9c;
}

.x {
  color: #7a7a7a;
  font-size: 15px;
}

.seq-name {
  margin-left: 14px;
  font-weight: 700;
  color: #8e97a0;
}

.seq-ham {
  width: 12px;
  height: 10px;
  margin-left: 13px;
}

.timecode {
  height: 34px;
  padding: 2px 0 0 23px;
  font-size: 21px;
  font-weight: 700;
  line-height: 34px;
  letter-spacing: 0.2px;
  color: #2b8ce6;
}

.lens-tracks {
  margin-top: 114px;
  background: linear-gradient(90deg, #262626 201px, #1f1f1f 201px);
}

.row {
  display: flex;
  align-items: center;
  height: 34px;
  border-top: 1px solid #303030;
}

.row > i {
  width: 59px;
}

.row .patch {
  width: 42px;
  height: 100%;
  margin-left: 17px;
  background: #0c5f9c;
  color: #6aa6d4;
  display: flex;
  align-items: center;
  justify-content: center;
}

.row b {
  font-weight: 400;
  font-size: 13px;
}

.lk {
  width: 12px;
  height: 16px;
  margin: 0 7px;
}

.row > i + .lk {
  margin-left: 7px;
}

.tgt {
  width: 43px;
  text-align: center;
  color: #7a7a7a;
  margin: 0;
}

.row .tgt.patch {
  margin: 0;
  width: 43px;
}

.sn {
  width: 18px;
  height: 14px;
  margin-left: 11px;
}

.ey {
  width: 18px;
  height: 12px;
  margin-left: 17px;
}

.row.v1 {
  height: 33px;
}

.row.a1 {
  margin-top: 6px;
  height: 40px;
  align-items: flex-start;
  border-top: 0;
}

.row.a1 .patch {
  height: 40px;
  align-items: flex-start;
  padding-top: 6px;
}

.row.a1 svg {
  margin-top: 6px;
}

.lens-zero {
  position: absolute;
  left: 426px;
  top: 187px;
  font-size: 16px;
  font-weight: 700;
  line-height: 16px;
  color: #6e6e6e;
}

.lens-work {
  position: absolute;
  left: 424px;
  top: 221px;
  width: 20px;
  height: 3px;
  background: #d6c62c;
}

.popup {
  position: absolute;
  left: 56px;
  top: 184px;
  width: 339px;
  height: 87px;
  padding: 0 0 0 8px;
  background: #2a2a2a;
  border: 2px solid #0e0e0e;
  box-shadow: 0 2px 6px rgba(0, 0, 0, 0.5);
  font-size: 15.200px;
  color: #7c7c7c;
}

.pop-row {
  height: 29px;
  display: flex;
  align-items: center;
  white-space: nowrap;
}

.bullet {
  width: 6px;
  height: 6px;
  background: #b0b0b0;
  margin-right: 11px;
}

.bullet.none {
  background: none;
}

.pop-ico {
  width: 26px;
  height: 18px;
  color: #b8b8b8;
  margin-right: 7px;
}
```
